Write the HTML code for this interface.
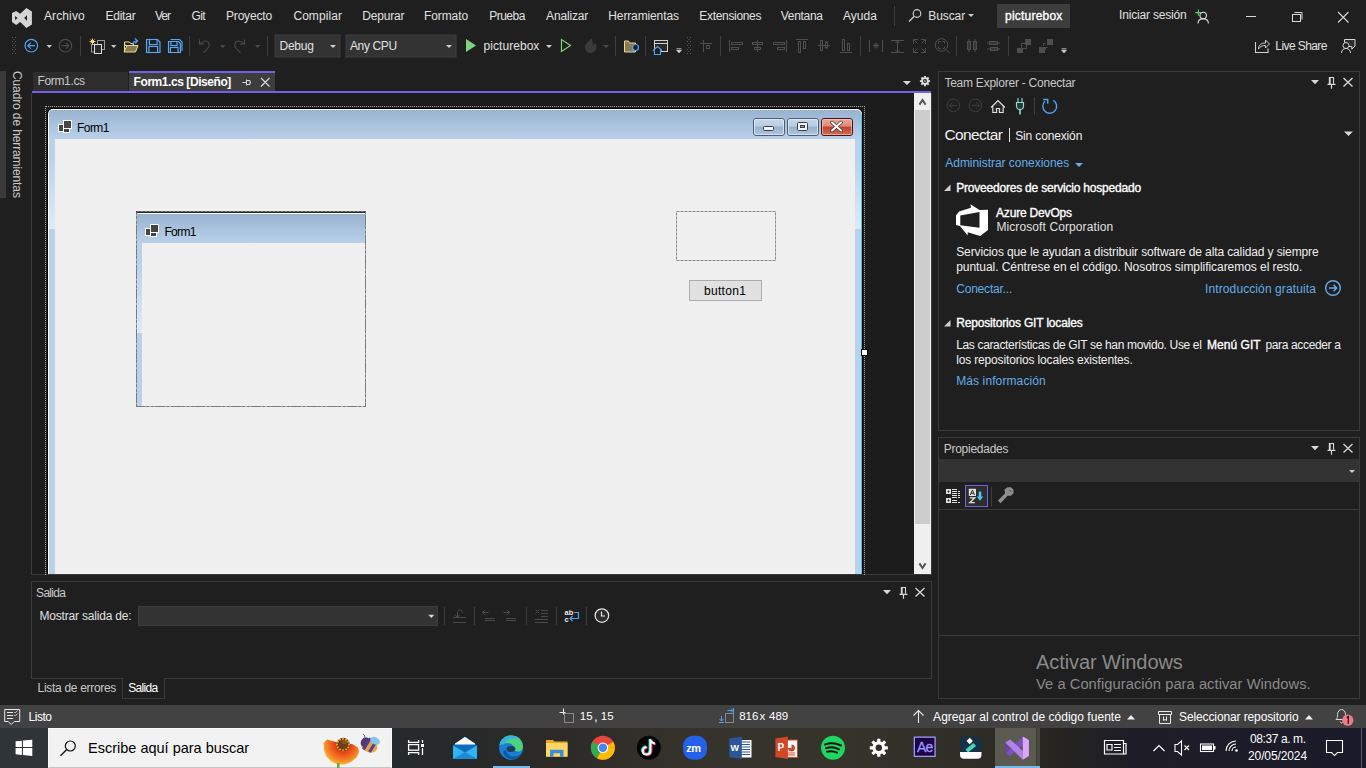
<!DOCTYPE html>
<html><head><meta charset="utf-8">
<style>
*{margin:0;padding:0;box-sizing:border-box}
html,body{width:1366px;height:768px;overflow:hidden;background:#1f1f1f;font-family:"Liberation Sans",sans-serif;font-size:12px;color:#e0e0e0}
.a{position:absolute}
.t{position:absolute;white-space:nowrap;line-height:1}
svg{position:absolute;overflow:visible}
</style></head><body>
<div class="t" style="left:43.90px;top:10.04px;letter-spacing:0.133px">Archivo</div>
<div class="t" style="left:105.40px;top:10.04px;letter-spacing:-0.220px">Editar</div>
<div class="t" style="left:155.00px;top:10.04px;letter-spacing:-1.000px">Ver</div>
<div class="t" style="left:191.50px;top:10.04px;letter-spacing:-0.600px">Git</div>
<div class="t" style="left:226.00px;top:10.04px;letter-spacing:-0.186px">Proyecto</div>
<div class="t" style="left:293.40px;top:10.04px;letter-spacing:0.071px">Compilar</div>
<div class="t" style="left:362.30px;top:10.04px;letter-spacing:-0.200px">Depurar</div>
<div class="t" style="left:424.10px;top:10.04px;letter-spacing:-0.117px">Formato</div>
<div class="t" style="left:489.20px;top:10.04px;letter-spacing:-0.500px">Prueba</div>
<div class="t" style="left:546.10px;top:10.04px;letter-spacing:-0.171px">Analizar</div>
<div class="t" style="left:608.30px;top:10.04px;letter-spacing:-0.127px">Herramientas</div>
<div class="t" style="left:699.30px;top:10.04px;letter-spacing:-0.320px">Extensiones</div>
<div class="t" style="left:780.80px;top:10.04px;letter-spacing:-0.300px">Ventana</div>
<div class="t" style="left:843.00px;top:10.04px">Ayuda</div>
<div class="a" style="left:997px;top:4px;width:73px;height:24px;background:#3d3d3d"></div>
<div class="t" style="left:928.30px;top:9.64px;letter-spacing:-0.100px">Buscar</div>
<div class="t" style="left:1005.00px;top:9.84px;color:#ffffff;-webkit-text-stroke:0.35px #ffffff;letter-spacing:0.222px">picturebox</div>
<div class="t" style="left:1119.00px;top:8.64px;letter-spacing:-0.177px">Iniciar sesión</div>
<!-- ICONS TOP -->
<svg width="1366" height="768" style="left:0;top:0">
<!-- VS logo -->
<path fill="#d4d4d4" fill-rule="evenodd" d="M12 13.1L16.2 10.9L20.2 13.8L26.4 8L31.9 11.5L31.9 24.4L26.4 27.9L20.2 21.9L16.2 25L12 21.9Z M15.1 16L17.6 18L15.1 20Z M27 15.3L24.2 18L27 20.8Z"/>
<!-- menubar separator -->
<rect x="894" y="6" width="1" height="20" fill="#3d3d3d"/>
<!-- search magnifier -->
<circle cx="917" cy="13.5" r="3.8" fill="none" stroke="#d0d0d0" stroke-width="1.2"/>
<line x1="914.3" y1="16.2" x2="909" y2="21.5" stroke="#d0d0d0" stroke-width="1.3"/>
<path d="M968 14h6l-3 3z" fill="#d0d0d0"/>
<!-- person icon signin -->
<circle cx="1203.2" cy="15.4" r="3.2" fill="none" stroke="#d8d8d8" stroke-width="1.1"/>
<path d="M1198 23.5c0-3 2.3-4.6 5.2-4.6s5.2 1.6 5.2 4.6" fill="none" stroke="#d8d8d8" stroke-width="1.1"/>
<path d="M1195.2 12.6h6.4M1198.4 9.4v6.4" stroke="#5fd35f" stroke-width="1.1"/>
<!-- window controls -->
<rect x="1246" y="16" width="10" height="1" fill="#d8d8d8"/>
<rect x="1292.5" y="14.5" width="8" height="7" fill="none" stroke="#d8d8d8" stroke-width="1"/>
<path d="M1294.5 12.5h7.5v7" fill="none" stroke="#d8d8d8" stroke-width="1"/>
<path d="M1338 12l10.5 10.5M1348.5 12l-10.5 10.5" stroke="#d8d8d8" stroke-width="1.1"/>

<!-- TOOLBAR -->
<g fill="#5a5a5a">
<rect x="12" y="37" width="1" height="1"/><rect x="15" y="37" width="1" height="1"/>
<rect x="13.5" y="39" width="1" height="1"/>
<rect x="12" y="41" width="1" height="1"/><rect x="15" y="41" width="1" height="1"/>
<rect x="13.5" y="43" width="1" height="1"/>
<rect x="12" y="45" width="1" height="1"/><rect x="15" y="45" width="1" height="1"/>
<rect x="13.5" y="47" width="1" height="1"/>
<rect x="12" y="49" width="1" height="1"/><rect x="15" y="49" width="1" height="1"/>
<rect x="13.5" y="51" width="1" height="1"/>
<rect x="12" y="53" width="1" height="1"/><rect x="15" y="53" width="1" height="1"/>
</g>
<circle cx="31.3" cy="45.7" r="6.3" fill="none" stroke="#4fa3f2" stroke-width="1.2"/>
<path d="M35 45.7h-7M30.8 42.7l-3 3l3 3" fill="none" stroke="#4fa3f2" stroke-width="1.2"/>
<path d="M46.5 45h5.5l-2.75 3z" fill="#c8c8c8"/>
<circle cx="65.4" cy="45.7" r="6.3" fill="none" stroke="#4a4a4a" stroke-width="1.2"/>
<path d="M61.7 45.7h7M65.9 42.7l3 3l-3 3" fill="none" stroke="#4a4a4a" stroke-width="1.2"/>
<rect x="80" y="36" width="1" height="20" fill="#3d3d3d"/>
<!-- new project -->
<rect x="97.5" y="40.5" width="7" height="9" fill="#1f1f1f" stroke="#9a9a9a" stroke-width="1"/>
<rect x="91.5" y="44.5" width="6" height="7.5" fill="none" stroke="#9a9a9a" stroke-width="1"/>
<rect x="94.5" y="44.5" width="7" height="9" fill="#2a2a2a" stroke="#e0e0e0" stroke-width="1"/>
<path d="M92.5 38.5v6M89.5 41.5h6M90.5 39.5l4 4M94.5 39.5l-4 4" stroke="#f0d77a" stroke-width="1"/>
<path d="M111 45h5.5l-2.75 3z" fill="#c8c8c8"/>
<!-- open folder -->
<path d="M124.5 42h5l1 1.5h3v2h-8.5z" fill="none" stroke="#f0d890" stroke-width="1"/>
<path d="M124.5 52V42.5M124 52h11.5l2.5-6.5h-11z" fill="#8a7a50" stroke="#f0d890" stroke-width="1"/>
<path d="M132.5 45.5c0-3 1.5-4.5 4.5-4.5M135 38.5l2.5 2.5l-2.5 2.5" fill="none" stroke="#4fa3f2" stroke-width="1.2"/>
<!-- save -->
<path d="M146.5 39.5h11l2.5 2.5v10.5h-13.5z" fill="#243444" stroke="#59a8f0" stroke-width="1.1"/>
<rect x="149.5" y="39.5" width="7.5" height="5" fill="#1f1f1f" stroke="#59a8f0" stroke-width="1.1"/>
<rect x="149" y="46.5" width="8.5" height="6" fill="#1f1f1f" stroke="#59a8f0" stroke-width="1.1"/>
<!-- save all -->
<path d="M170.5 39.5h9l2.5 2.5v9" fill="none" stroke="#59a8f0" stroke-width="1.1"/>
<path d="M168.5 41.5h10l2 2v9h-12z" fill="#243444" stroke="#59a8f0" stroke-width="1.1"/>
<rect x="171" y="41.5" width="6" height="4" fill="#1f1f1f" stroke="#59a8f0" stroke-width="1.1"/>
<rect x="170.5" y="47.5" width="7.5" height="5" fill="#1f1f1f" stroke="#59a8f0" stroke-width="1.1"/>
<rect x="189" y="36" width="1" height="20" fill="#3d3d3d"/>
<!-- undo / redo -->
<path d="M203.5 53l4.5-5c2.5-3 1-7-2.5-7c-2 0-3.5 1-5 2.5M199.5 39.5v4.5h4.5" fill="none" stroke="#4a4a4a" stroke-width="1.1"/>
<path d="M220 45h5.5l-2.75 3z" fill="#4a4a4a"/>
<path d="M240.5 53l-4.5-5c-2.5-3-1-7 2.5-7c2 0 3.5 1 5 2.5M244.5 39.5v4.5h-4.5" fill="none" stroke="#4a4a4a" stroke-width="1.1"/>
<path d="M255 45h5.5l-2.75 3z" fill="#4a4a4a"/>
<rect x="267" y="36" width="1" height="20" fill="#3d3d3d"/>
<!-- combos -->
<rect x="275" y="35" width="65" height="22" fill="#333333" stroke="#3f3f3f" stroke-width="1"/>
<path d="M330 45h6l-3 3z" fill="#d0d0d0"/>
<rect x="346" y="35" width="110" height="22" fill="#333333" stroke="#3f3f3f" stroke-width="1"/>
<path d="M446 45h6l-3 3z" fill="#d0d0d0"/>
<!-- play -->
<path d="M466 39v13l10-6.5z" fill="#7ed47e"/>
<path d="M546 45h6l-3 3z" fill="#d0d0d0"/>
<path d="M561.5 39.5v12l9-6z" fill="none" stroke="#7ed47e" stroke-width="1.2"/>
<!-- hot reload (dim) -->
<path d="M591 38c-1 3-6 5-6 9.5c0 3 2.5 5.5 5.5 5.5s6-2.5 6-6c0-2-1-3.5-2-4.5c0 2-1 3-2 3c1-3 0-5.5-1.5-7.5z" fill="#3a3a3a"/>
<path d="M603 45h6l-3 3z" fill="#4a4a4a"/>
<rect x="615" y="36" width="1" height="20" fill="#3d3d3d"/>
<!-- folder search -->
<path d="M624.5 41v11h11V43h-6l-1-2z" fill="#8a7a50" stroke="#f0d890" stroke-width="1"/>
<circle cx="635.5" cy="47.5" r="3" fill="#1f1f1f" stroke="#4fa3f2" stroke-width="1.2"/>
<line x1="633.3" y1="49.7" x2="630.5" y2="52.5" stroke="#4fa3f2" stroke-width="1.3"/>
<rect x="645" y="36" width="1" height="20" fill="#3d3d3d"/>
<!-- form view icon -->
<rect x="654.5" y="40.5" width="13" height="11" fill="#2a2a2a" stroke="#d0d0d0" stroke-width="1"/>
<rect x="655" y="43" width="12" height="1" fill="#d0d0d0"/>
<path d="M654.5 54.5v-4.5l-1.5 0.5l4.5-4l4.5 4l-1.5-0.5v4.5z" fill="#1f1f1f" stroke="#4fa3f2" stroke-width="1.1"/>
<path d="M676.5 48.5h5M676.5 50h5l-2.5 3z" fill="#d0d0d0" stroke="#d0d0d0" stroke-width="0.6"/>
<g fill="#5a5a5a">
<rect x="687" y="37" width="1" height="1"/><rect x="690" y="37" width="1" height="1"/>
<rect x="688.5" y="39" width="1" height="1"/>
<rect x="687" y="41" width="1" height="1"/><rect x="690" y="41" width="1" height="1"/>
<rect x="688.5" y="43" width="1" height="1"/>
<rect x="687" y="45" width="1" height="1"/><rect x="690" y="45" width="1" height="1"/>
<rect x="688.5" y="47" width="1" height="1"/>
<rect x="687" y="49" width="1" height="1"/><rect x="690" y="49" width="1" height="1"/>
<rect x="688.5" y="51" width="1" height="1"/>
<rect x="687" y="53" width="1" height="1"/><rect x="690" y="53" width="1" height="1"/>
</g>
<g fill="none" stroke="#4e4e4e" stroke-width="1">
<!-- align to grid -->
<path d="M700 43.5h12M703.5 40v12"/><rect x="706.5" y="45.5" width="3" height="3"/>
<!-- align left -->
<path d="M729.5 40v12"/><rect x="731.5" y="42.5" width="11" height="2"/><rect x="731.5" y="47.5" width="7" height="2"/>
<!-- align center -->
<path d="M757.5 40v12"/><rect x="752.5" y="42.5" width="10" height="2"/><rect x="754.5" y="47.5" width="6" height="2"/>
<!-- align right -->
<path d="M786.5 40v12"/><rect x="773.5" y="42.5" width="11" height="2"/><rect x="777.5" y="47.5" width="7" height="2"/>
<!-- align tops -->
<path d="M796 39.5h12"/><rect x="798.5" y="41.5" width="2" height="11"/><rect x="803.5" y="41.5" width="2" height="7"/>
<!-- align middles -->
<path d="M818 45.5h12"/><rect x="820.5" y="40.5" width="2" height="10"/><rect x="825.5" y="42" width="2" height="6"/>
<!-- align bottoms -->
<path d="M840 52.5h12"/><rect x="842.5" y="39.5" width="2" height="11"/><rect x="847.5" y="43.5" width="2" height="7"/>
<!-- size to grid -->
<path d="M869.5 40v12M882.5 40v12M873 45.5h6M876 42.5v6M874 43.5l4 4M878 43.5l-4 4"/>
<!-- same height -->
<path d="M891 40.5h13M891 52.5h13M897.5 41v11M895.5 43l2-2l2 2M895.5 50l2 2l2-2"/>
<!-- size -->
<path d="M913.5 44v-4.5h4.5M925.5 44v-4.5h-4.5M913.5 48v4.5h4.5M925.5 48v4.5h-4.5M914 40l3.5 3.5M925 40l-3.5 3.5M914 52l3.5-3.5M925 52l-3.5-3.5"/>
<!-- zoom circle -->
<circle cx="941.5" cy="45" r="6.3"/><path d="M946 49.5l4 4M938.5 43.5v-2h2M944.5 43.5v-2h-2M938.5 46.5v2h2M944.5 46.5v2h-2"/>
<!-- spacing -->
<rect x="967.5" y="41.5" width="3" height="8"/><rect x="973.5" y="41.5" width="3" height="8"/><path d="M969 39v13M975 39v13"/>
<rect x="989.5" y="41.5" width="8" height="3"/><rect x="990.5" y="47.5" width="7" height="3"/><path d="M987 43h13M987 49h13"/>
</g>
<rect x="956" y="36" width="1" height="20" fill="#3d3d3d"/>
<rect x="1008" y="36" width="1" height="20" fill="#3d3d3d"/>
<rect x="860" y="36" width="1" height="20" fill="#3d3d3d"/>
<rect x="720" y="36" width="1" height="20" fill="#3d3d3d"/>
<!-- bring front / send back -->
<rect x="1017" y="48" width="6" height="5" fill="#4e4e4e"/><rect x="1025" y="39" width="6" height="6" fill="#4e4e4e"/>
<rect x="1021.5" y="43.5" width="5" height="5" fill="none" stroke="#4e4e4e"/>
<rect x="1039" y="47" width="6" height="6" fill="#4e4e4e"/><rect x="1047" y="39" width="6" height="6" fill="#4e4e4e"/>
<path d="M1043.5 45.5v-2h2M1047.5 47.5h-2v2" fill="none" stroke="#4e4e4e"/>
<path d="M1061.5 48.5h5M1061.5 50h5l-2.5 3z" fill="#d0d0d0" stroke="#d0d0d0" stroke-width="0.6"/>
<!-- live share -->
<path d="M1255.5 42v10.5h12.5v-4" fill="none" stroke="#d0d0d0" stroke-width="1.1"/>
<path d="M1258.5 49c0-4 2.5-6 7-6v-3l4 4l-4 4v-2.5c-3.5 0-5.5 1-7 3.5z" fill="none" stroke="#d0d0d0" stroke-width="1"/>
<!-- feedback -->
<path d="M1344.5 45V39.5h10.5v6.5l-3.2 3.2V46.5h-5" fill="#2d2d2d" stroke="#d8d8d8" stroke-width="1"/>
<circle cx="1346" cy="45.5" r="3" fill="#1f1f1f" stroke="#d0d0d0" stroke-width="1"/>
<path d="M1341.5 53c0-3 2-4.5 4.5-4.5s4.5 1.5 4.5 4.5" fill="none" stroke="#d0d0d0" stroke-width="1"/>
</svg>



<div class="t" style="left:279.50px;top:40.04px;letter-spacing:-0.250px">Debug</div>
<div class="t" style="left:350.00px;top:40.04px;letter-spacing:-0.383px">Any CPU</div>
<div class="t" style="left:483.50px;top:40.04px;letter-spacing:0.056px">picturebox</div>
<div class="t" style="left:1275.30px;top:39.84px;letter-spacing:-0.578px">Live Share</div>
<div class="a" style="left:0;top:71px;width:6px;height:127px;background:#3a3a3a"></div>
<div class="t" style="left:10.7px;top:70.5px;writing-mode:vertical-rl;color:#c8c8c8;letter-spacing:-0.12px">Cuadro de herramientas</div>
<div class="a" style="left:33px;top:72px;width:95px;height:19px;background:#2d2d2d"></div>
<div class="t" style="left:37.50px;top:74.94px;color:#c8c8c8;letter-spacing:-0.343px">Form1.cs</div>
<div class="a" style="left:129px;top:71px;width:146px;height:20px;background:#3d3d3d;border-top:2px solid #7160e8"></div>
<div class="t" style="left:133.60px;top:75.94px;color:#ffffff;font-weight:bold;letter-spacing:-0.438px">Form1.cs [Diseño]</div>
<div class="a" style="left:32px;top:91px;width:899px;height:2px;background:#7160e8"></div>
<svg width="1366" height="768" style="left:0;top:0">
<path d="M242.5 82.5h4M246.5 79.5v6M246.5 80.5h3.5v4h-3.5M250 82.5h1" fill="none" stroke="#d8d8d8" stroke-width="1"/>
<path d="M261 78l8.5 8.5M269.5 78l-8.5 8.5" stroke="#d8d8d8" stroke-width="1.2"/>
<path d="M902.8 81h8.2l-4.1 4z" fill="#d8d8d8"/>
<g transform="translate(925 81.1)" fill="#e0e0e0"><circle r="3.8"/><g stroke="#e0e0e0" stroke-width="1.9"><path d="M0 -5.1v10.2M-5.1 0h10.2M-3.6 -3.6l7.2 7.2M3.6 -3.6l-7.2 7.2"/></g><circle r="2" fill="#1f1f1f"/><circle r="0.9" fill="#d0d0d0"/></g>
</svg>
<div class="a" style="left:31px;top:93px;width:901px;height:482px;border:1px solid #3a3a3a;border-top:none;background:#1c1c1c"></div>
<!-- FORM -->
<div class="a" style="left:45px;top:106px;width:820px;height:469px;border:1px dotted #a8a8a8;border-bottom:none"></div>
<div class="a" style="left:47px;top:108px;width:816px;height:466px;background:#000;border-radius:6px 6px 0 0"></div>
<div class="a" style="left:48px;top:109px;width:814px;height:465px;background:#fff;border-radius:5px 5px 0 0"></div>
<div class="a" style="left:861px;top:114px;width:1px;height:460px;background:#3cc8f0"></div>
<div class="a" style="left:49px;top:110px;width:812px;height:464px;background:linear-gradient(#98b2d0,#b9d1ea 29px,#b9d1ea);border-radius:4px 4px 0 0"></div>
<div class="a" style="left:55px;top:139px;width:800px;height:435px;background:#f0f0f0"></div>
<div class="a" style="left:49px;top:139px;width:6px;height:90px;background:linear-gradient(#b9d1ea 20%,#dfeaf6)"></div>
<div class="a" style="left:855px;top:139px;width:6px;height:90px;background:linear-gradient(#b9d1ea 20%,#dfeaf6)"></div>
<svg width="1366" height="768" style="left:0;top:0">
<g stroke="#fff" stroke-width="1" fill="#444">
<rect x="63.5" y="120.5" width="8" height="8"/><rect x="58.5" y="124.5" width="5" height="7"/><rect x="63.5" y="128.5" width="6" height="4"/>
<rect x="150.5" y="224.5" width="8" height="8"/><rect x="145.5" y="228.5" width="5" height="7"/><rect x="150.5" y="232.5" width="6" height="4"/>
</g>
<!-- title buttons -->
<defs>
<linearGradient id="gb" x1="0" y1="0" x2="0" y2="1"><stop offset="0" stop-color="#c6d8ec"/><stop offset="0.45" stop-color="#b8cde4"/><stop offset="0.5" stop-color="#98b2cc"/><stop offset="1" stop-color="#aec6e0"/></linearGradient>
<linearGradient id="gr" x1="0" y1="0" x2="0" y2="1"><stop offset="0" stop-color="#eaa898"/><stop offset="0.45" stop-color="#de8a76"/><stop offset="0.5" stop-color="#c0422a"/><stop offset="1" stop-color="#d2705a"/></linearGradient>
</defs>
<rect x="753.5" y="118.5" width="31" height="17" rx="2.5" fill="url(#gb)" stroke="#4e5d72"/>
<rect x="754.5" y="119.5" width="29" height="15" rx="1.5" fill="none" stroke="#e4eef8" stroke-opacity="0.7"/>
<rect x="763.5" y="126.5" width="10" height="4" rx="1" fill="#f4f4f4" stroke="#3a3a4a"/>
<rect x="787.5" y="118.5" width="31" height="17" rx="2.5" fill="url(#gb)" stroke="#4e5d72"/>
<rect x="788.5" y="119.5" width="29" height="15" rx="1.5" fill="none" stroke="#e4eef8" stroke-opacity="0.7"/>
<rect x="797.5" y="122.5" width="10" height="8" rx="1" fill="#f4f4f4" stroke="#3a3a4a"/>
<rect x="800.5" y="125.5" width="4" height="2" fill="#8aa8c8" stroke="#3a3a4a"/>
<rect x="821.5" y="118.5" width="31" height="17" rx="2.5" fill="url(#gr)" stroke="#4a1414"/>
<rect x="822.5" y="119.5" width="29" height="15" rx="1.5" fill="none" stroke="#f8d0c8" stroke-opacity="0.6"/>
<path d="M832 122.5l4.5 4l4.5-4M832 130.5l4.5-4l4.5 4" fill="none" stroke="#3a3a4a" stroke-width="3.4" stroke-linecap="round"/>
<path d="M832 122.5l4.5 4l4.5-4M832 130.5l4.5-4l4.5 4" fill="none" stroke="#fff" stroke-width="2" stroke-linecap="round"/>
<!-- resize handle -->
<rect x="861.5" y="349.5" width="6" height="6" fill="#fff" stroke="#000"/>
<!-- picturebox dashed -->
<rect x="676.5" y="211.5" width="99" height="49" fill="none" stroke="#8a8a8a" stroke-dasharray="3 1"/>
</svg>
<!-- button1 -->
<div class="a" style="left:689px;top:280px;width:73px;height:21px;background:#e1e1e1;border:1px solid #adadad"></div>
<!-- inner form -->
<div class="a" style="left:136px;top:211px;width:230px;height:196px;border:1px dashed #7a7a7a"></div>
<div class="a" style="left:136px;top:211px;width:230px;height:2px;background:#2a2a2a"></div>
<div class="a" style="left:137px;top:213px;width:228px;height:1px;background:#fff"></div>
<div class="a" style="left:137px;top:214px;width:228px;height:29px;background:linear-gradient(#98b2d0,#b9d1ea)"></div>
<div class="a" style="left:137px;top:243px;width:5px;height:163px;background:#b9d1ea"></div>
<div class="a" style="left:137px;top:243px;width:5px;height:90px;background:linear-gradient(#b9d1ea 20%,#dfeaf6)"></div>
<div class="a" style="left:142px;top:243px;width:223px;height:163px;background:#f0f0f0"></div>
<svg width="1366" height="768" style="left:0;top:0">
<g stroke="#fff" stroke-width="1" fill="#444">
<rect x="150.5" y="224.5" width="8" height="8"/><rect x="145.5" y="228.5" width="5" height="7"/><rect x="150.5" y="232.5" width="6" height="4"/>
</g>
<rect x="136.5" y="211.5" width="229" height="195" fill="none" stroke="#7a7a7a" stroke-dasharray="3 1"/>
</svg>

<!-- SCROLLBAR -->
<div class="a" style="left:914px;top:93px;width:17px;height:481px;background:#f0f0f0"></div>
<div class="a" style="left:915px;top:110px;width:15px;height:414px;background:#cdcdcd"></div>
<svg width="1366" height="768" style="left:0;top:0">
<path d="M919.4 104.6L922.5 100L925.6 104.6" fill="none" stroke="#555" stroke-width="2"/>
<path d="M919.4 563.4L922.5 568L925.6 563.4" fill="none" stroke="#555" stroke-width="2"/>
</svg>

<div class="t" style="left:77.00px;top:121.54px;color:#000000;letter-spacing:-0.550px">Form1</div>
<div class="t" style="left:164.40px;top:225.84px;color:#000000;letter-spacing:-0.650px">Form1</div>
<div class="t" style="left:704.00px;top:285.34px;color:#000000;letter-spacing:0.300px">button1</div>
<div class="a" style="left:31px;top:581px;width:901px;height:98px;border:1px solid #3a3a3a"></div>
<div class="t" style="left:36.10px;top:586.74px;color:#c8c8c8;letter-spacing:-0.700px">Salida</div>
<div class="t" style="left:39.50px;top:610.44px;letter-spacing:-0.188px">Mostrar salida de:</div>
<div class="a" style="left:138px;top:606px;width:300px;height:20px;background:#333333;border:1px solid #3c3c3c"></div>
<div class="a" style="left:122px;top:678px;width:43px;height:21px;background:#1f1f1f;border:1px solid #3a3a3a;border-top:none"></div>
<div class="t" style="left:37.60px;top:681.64px;color:#c8c8c8;letter-spacing:-0.307px">Lista de errores</div>
<div class="t" style="left:128.20px;top:681.64px;color:#ffffff;letter-spacing:-0.680px">Salida</div>
<div class="a" style="left:938px;top:71px;width:422px;height:360px;border:1px solid #3a3a3a"></div>
<div class="t" style="left:944.40px;top:77.34px;color:#c8c8c8;letter-spacing:-0.239px">Team Explorer - Conectar</div>
<div class="t" style="left:944.40px;top:127.08px;font-size:15.5px;color:#f0f0f0;letter-spacing:-0.629px">Conectar</div>
<div class="a" style="left:1009px;top:128px;width:1px;height:14px;background:#e0e0e0"></div>
<div class="t" style="left:1015.20px;top:130.04px;color:#f0f0f0;letter-spacing:-0.145px">Sin conexión</div>
<div class="t" style="left:945.30px;top:157.24px;color:#64acea;letter-spacing:-0.038px">Administrar conexiones</div>
<div class="t" style="left:956.20px;top:181.84px;color:#ffffff;-webkit-text-stroke:0.35px #ffffff;letter-spacing:-0.206px">Proveedores de servicio hospedado</div>
<div class="t" style="left:996.00px;top:206.84px;color:#ffffff;-webkit-text-stroke:0.35px #ffffff;letter-spacing:-0.182px">Azure DevOps</div>
<div class="t" style="left:996.40px;top:220.84px;letter-spacing:0.100px">Microsoft Corporation</div>
<div class="t" style="left:956.20px;top:246.44px;color:#f0f0f0;letter-spacing:-0.120px">Servicios que le ayudan a distribuir software de alta calidad y siempre</div>
<div class="t" style="left:956.20px;top:261.14px;color:#f0f0f0;letter-spacing:-0.052px">puntual. Céntrese en el código. Nosotros simplificaremos el resto.</div>
<div class="t" style="left:956.20px;top:282.54px;color:#64acea;letter-spacing:-0.200px">Conectar...</div>
<div class="t" style="left:1205.10px;top:282.54px;color:#64acea;letter-spacing:0.100px">Introducción gratuita</div>
<div class="t" style="left:956.20px;top:316.84px;color:#ffffff;-webkit-text-stroke:0.35px #ffffff;letter-spacing:-0.174px">Repositorios GIT locales</div>
<div class="t" style="left:956.20px;top:339.34px;color:#f0f0f0;letter-spacing:-0.345px">Las características de GIT se han movido. Use el</div>
<div class="t" style="left:1207.00px;top:339.34px;color:#ffffff;-webkit-text-stroke:0.35px #ffffff;letter-spacing:0.043px">Menú GIT</div>
<div class="t" style="left:1265.50px;top:339.34px;color:#f0f0f0;letter-spacing:-0.362px">para acceder a</div>
<div class="t" style="left:956.20px;top:354.34px;color:#f0f0f0;letter-spacing:-0.157px">los repositorios locales existentes.</div>
<div class="t" style="left:956.20px;top:375.04px;color:#64acea;letter-spacing:0.107px">Más información</div>
<div class="a" style="left:938px;top:437px;width:422px;height:262px;border:1px solid #3a3a3a"></div>
<div class="t" style="left:943.70px;top:442.54px;color:#c8c8c8;letter-spacing:-0.260px">Propiedades</div>
<div class="a" style="left:939px;top:459px;width:420px;height:23px;background:#333333"></div>
<div class="a" style="left:939px;top:509px;width:420px;height:1px;background:#3a3a3a"></div>
<div class="a" style="left:939px;top:635px;width:420px;height:1px;background:#3a3a3a"></div>
<div class="t" style="left:1036.00px;top:652.07px;font-size:20px;color:#8a8a8a;letter-spacing:-0.071px">Activar Windows</div>
<div class="t" style="left:1036.00px;top:677.36px;font-size:14.7px;color:#8a8a8a;letter-spacing:0.051px">Ve a Configuración para activar Windows.</div>
<div class="a" style="left:0;top:705px;width:1366px;height:23px;background:#424242"></div>
<div class="t" style="left:28.50px;top:711.04px;color:#ffffff;letter-spacing:-0.450px">Listo</div>
<div class="t" style="left:579.80px;top:711.17px;font-size:11.5px;color:#ffffff">15</div>
<div class="t" style="left:594.20px;top:710.74px;color:#ffffff">,</div>
<div class="t" style="left:600.80px;top:711.17px;font-size:11.5px;color:#ffffff">15</div>
<div class="t" style="left:739.20px;top:711.17px;font-size:11.5px;color:#ffffff">816</div>
<div class="t" style="left:759.40px;top:711.17px;font-size:11.5px;color:#ffffff">x</div>
<div class="t" style="left:769.00px;top:711.17px;font-size:11.5px;color:#ffffff">489</div>
<div class="t" style="left:933.10px;top:710.74px;color:#ffffff;letter-spacing:0.029px">Agregar al control de código fuente</div>
<div class="t" style="left:1179.00px;top:710.74px;color:#ffffff;letter-spacing:-0.114px">Seleccionar repositorio</div>
<div class="a" style="left:0;top:728px;width:1366px;height:40px;background:linear-gradient(90deg,#2e3438 0,#2e3438 48px,#252a2d 392px,#2b2a27 550px,#35332b 700px,#36332b 850px,#2d2b25 1000px,#252420 1060px,#1e1d27 1130px,#1b1a2a 1366px)"></div>
<div class="a" style="left:48px;top:728px;width:344px;height:40px;background:#f2f2f2;border:1px solid #fafafa;border-bottom:1px solid #c4c4c4"></div>
<div class="t" style="left:88.00px;top:741.13px;font-size:14.5px;color:#000000">Escribe aquí para buscar</div>
<div class="t" style="left:1250.00px;top:732.64px;color:#ffffff;letter-spacing:-0.400px">08:37 a. m.</div>
<div class="t" style="left:1248.00px;top:750.34px;color:#ffffff;letter-spacing:-0.111px">20/05/2024</div>
<svg width="1366" height="768" style="left:0;top:0">
<!-- panel header icons: Team Explorer -->
<g id="hdr">
<path d="M1311 80h8l-4 4.2z" fill="#d8d8d8"/>
<path d="M1329.7 77.5h3.8v6.2" fill="none" stroke="#d8d8d8" stroke-width="1.1"/><rect x="1328.8" y="77" width="1.9" height="7" fill="#d8d8d8"/><path d="M1327.5 84.3h8M1331.5 84.5v4.2" fill="none" stroke="#d8d8d8" stroke-width="1.2"/>
<path d="M1343.5 78l9 8.5M1352.5 78l-9 8.5" stroke="#d8d8d8" stroke-width="1.3"/>
</g>
<use href="#hdr" transform="translate(0 366)"/>
<use href="#hdr" transform="translate(-428 510)"/>
<!-- team explorer nav -->
<circle cx="953.4" cy="105.4" r="6.3" fill="none" stroke="#3e3e3e" stroke-width="1"/>
<path d="M957 105.4h-7M952.5 102.4l-3 3l3 3" fill="none" stroke="#3e3e3e" stroke-width="1"/>
<circle cx="975.4" cy="105.4" r="6.3" fill="none" stroke="#3e3e3e" stroke-width="1"/>
<path d="M971.8 105.4h7M976.3 102.4l3 3l-3 3" fill="none" stroke="#3e3e3e" stroke-width="1"/>
<path d="M991 107.5l7-7l7 7M992.8 106v6.5h3.8v-4h2.8v4h3.8v-6.5" fill="#333" stroke="#e0e0e0" stroke-width="1.1"/>
<path d="M1018 98v4M1022 98v4" stroke="#8ee0d0" stroke-width="1.1"/>
<path d="M1016.5 102.5h7v3.5c0 2-1.5 3.5-3.5 3.5s-3.5-1.5-3.5-3.5z" fill="#2a3a38" stroke="#8ee0d0" stroke-width="1.1"/>
<path d="M1020 109.5v5" stroke="#8ee0d0" stroke-width="1.6"/>
<rect x="1034" y="97" width="1" height="18" fill="#3d3d3d"/>
<path d="M1053.3 100.4A6.9 6.9 0 1 1 1045 101.3" fill="none" stroke="#4fa3f2" stroke-width="1.4"/>
<path d="M1043.2 99.5H1047.7V103.7" fill="none" stroke="#4fa3f2" stroke-width="1.5"/>
<path d="M1344 131.5h9l-4.5 4.5z" fill="#d8d8d8"/>
<path d="M1075 163h8l-4 4z" fill="#64acea"/>
<path d="M944 191h6.5v-6.5z" fill="#d0d0d0"/>
<path d="M944 326.5h6.5v-6.5z" fill="#d0d0d0"/>
<!-- azure devops -->
<path fill="#fff" fill-rule="evenodd" d="M970.5 204.2L979.5 210L988 209.7L988 230L980.2 236L967.7 232.3L967.7 235.5L959.9 226.1L956 225L956 215.5L959.1 211.6L970.9 207.7Z M960.3 215.5L979.5 212L979.5 227.7L960.3 225.3Z"/>
<!-- circle arrow -->
<circle cx="1333" cy="288" r="7.3" fill="none" stroke="#64acea" stroke-width="1.4"/>
<path d="M1329 288h7.5M1333.5 284.8l3.2 3.2l-3.2 3.2" fill="none" stroke="#64acea" stroke-width="1.4"/>
<!-- properties -->
<path d="M1349 470h6l-3 3z" fill="#d0d0d0"/>
<g fill="#e0e0e0">
<rect x="946" y="489" width="5" height="5"/><rect x="946" y="498" width="5" height="5"/>
<rect x="952" y="489" width="5" height="1"/><rect x="952" y="491" width="5" height="1"/><rect x="952" y="493" width="5" height="1"/><rect x="952" y="495" width="5" height="1"/><rect x="952" y="497" width="5" height="1"/><rect x="952" y="500" width="5" height="1"/><rect x="952" y="502" width="5" height="1"/>
<rect x="958" y="491" width="2" height="1"/><rect x="958" y="493" width="2" height="1"/><rect x="958" y="495" width="2" height="1"/><rect x="958" y="497" width="2" height="1"/><rect x="958" y="502" width="2" height="1"/>
</g>
<path d="M947.5 491.5h2M948.5 490.5v2M947.5 500.5h2M948.5 499.5v2" stroke="#222" stroke-width="1"/>
<rect x="965.5" y="485.5" width="22" height="21" fill="#2d2d2d" stroke="#7160e8" stroke-width="1"/>
<rect x="968.8" y="488.7" width="7.2" height="7.3" rx="0.5" fill="#e0e0e0"/>
<path d="M970.3 495l2.1-5l2.1 5M971 493.3h2.8" fill="none" stroke="#222" stroke-width="0.9"/>
<path d="M969.8 497.8h5l-5 4.8h5" fill="none" stroke="#e0e0e0" stroke-width="1.3"/>
<path d="M980 491.5v6" stroke="#4fc3f7" stroke-width="2.6"/>
<path d="M976.8 496.5h6.4l-3.2 4.3z" fill="#4fc3f7"/>
<rect x="991" y="487" width="1" height="19" fill="#3d3d3d"/>
<path d="M1004.5 489.5l3-2.3h3.5l2.5 2.6v3.5l-2.5 2.5h-3.3l-7.2 7.4l-2.6-2.6l7.1-7.2z" fill="#8e8e8e"/>
<path d="M1009.2 489.8l2 2" stroke="#6a6a6a" stroke-width="1.6"/>
<!-- output toolbar -->
<path d="M428.3 614.8h6l-3 3.2z" fill="#d8d8d8"/>
<g fill="#3d3d3d"><rect x="444" y="607" width="1" height="18"/><rect x="474" y="607" width="1" height="18"/><rect x="526" y="607" width="1" height="18"/><rect x="556" y="607" width="1" height="18"/><rect x="586" y="607" width="1" height="18"/></g>
<g fill="none" stroke="#4a4a4a" stroke-width="1">
<path d="M453 617.5h13M453 622.5h13M457.5 617v-4c0-2 1-3 2.5-3s2.5 1 2.5 3M455.5 615l2 2.5l2-2.5"/>
<path d="M482.5 612.5h6M485 610l-2.5 2.5l2.5 2.5"/><path d="M485 618.5h10M485 620.5h10"/>
<path d="M503.5 612.5h6M507 610l2.5 2.5l-2.5 2.5"/><path d="M506 618.5h10M506 620.5h10"/>
<path d="M535.5 609.5l4 4M539.5 609.5l-4 4M541 610.5h7M541 613.5h7M541 616.5h7M535 619.5h13M535 622.5h13"/>
</g>
<text x="564.5" y="615" font-family="Liberation Sans" font-size="7.5" font-weight="bold" fill="#e8e8e8">ab</text>
<text x="564.5" y="622" font-family="Liberation Sans" font-size="7.5" font-weight="bold" fill="#e8e8e8">c</text>
<path d="M574 612.5h4.5v6h-8.5M572.5 616l-2.5 2.5l2.5 2.5" fill="none" stroke="#4fa3f2" stroke-width="1.2"/>
<circle cx="601.9" cy="615.6" r="6.8" fill="#2d2d2d" stroke="#e8e8e8" stroke-width="1.2"/>
<path d="M601.5 611.5v4.5h3.5" fill="none" stroke="#e8e8e8" stroke-width="1.2"/>
</svg>
<svg width="1366" height="768" style="left:0;top:0">
<!-- status bar icons -->
<path d="M4.7 709.5h15v12h-5.5l-3 3l-3-3h-3.5z" fill="none" stroke="#e8e8e8" stroke-width="1"/>
<path d="M7 712.5h6M7 715.5h6M7 718.5h6" stroke="#e8e8e8" stroke-width="1"/>
<path d="M14.2 712l1 1l2.3-2.5M14.2 715l1 1l2.3-2.5" fill="none" stroke="#e8e8e8" stroke-width="0.8"/>
<path d="M563.5 708.5v6M559.5 712.5h6" stroke="#e8e8e8" stroke-width="1"/>
<rect x="564.5" y="713.5" width="9" height="9" fill="none" stroke="#d0d0d0" stroke-width="1" stroke-dasharray="1 1"/>
<rect x="725.5" y="713.5" width="8" height="9" fill="none" stroke="#d0d0d0" stroke-width="1" stroke-dasharray="1 1"/>
<path d="M727.5 710.5h5M731 708.5l2 2l-2 2M733.5 708v5" fill="none" stroke="#4fa3f2" stroke-width="1"/>
<path d="M721.5 716v5M719.5 719l2 2l2-2M719 722.5h5" fill="none" stroke="#4fa3f2" stroke-width="1"/>
<path d="M918.5 723v-12.5M913.5 715.5l5-5l5 5" fill="none" stroke="#e8e8e8" stroke-width="1.1"/>
<path d="M1127 719.5h8l-4-4.5z" fill="#f0f0f0"/>
<path d="M1305 719.5h8l-4-4.5z" fill="#f0f0f0"/>
<path d="M1158.5 711.5h13v3h-13z M1159.5 714.5v9h11v-9 M1163.5 716.5v4l1.5-1l1.5 1v-4" fill="none" stroke="#e8e8e8" stroke-width="1"/>
<path d="M1336 719.5c1.5-1 1.5-2.5 1.5-5c0-3 2-5 4-5s4 2 4 5c0 2.5 0 4 1.5 5z M1340 721.5c0.5 1 1 1.5 1.5 1.5s1-0.5 1.5-1.5" fill="none" stroke="#d8d8d8" stroke-width="1"/>
<circle cx="1347.8" cy="720.2" r="5.6" fill="#f07a85"/>
<path d="M1346.8 717.8l1.5-1.3v7.3" fill="none" stroke="#111" stroke-width="1.2"/>

<!-- TASKBAR ICONS -->
<!-- windows logo -->
<g fill="#fff">
<path d="M15.6 741.3L21.9 740.7V747H15.6z"/><path d="M22.9 740.6L32.3 739.7V747H22.9z"/>
<path d="M15.6 748H21.9V754.9L15.6 754.3z"/><path d="M22.9 748H32.3V756.1L22.9 755z"/>
</g>
<!-- search icon -->
<circle cx="70.3" cy="746" r="5" fill="none" stroke="#111" stroke-width="1.2"/>
<path d="M66.8 749.5l-6.3 6.3" stroke="#111" stroke-width="1.3"/>
<!-- flower -->
<defs>
<radialGradient id="pet" cx="343" cy="744" r="21" gradientUnits="userSpaceOnUse"><stop offset="0.2" stop-color="#c83010"/><stop offset="0.55" stop-color="#f05a1c"/><stop offset="0.85" stop-color="#f7902a"/><stop offset="1" stop-color="#f8c040"/></radialGradient>
</defs>
<path d="M343 744L327 739.5L323.5 743L324 750L326 756L331 761.5L338 764.5L345 764.5L351 762L356.5 757.5L359 752L358 747.5L352 744z" fill="url(#pet)"/>
<rect x="337" y="763" width="2.5" height="5" fill="#6aa83a"/>
<circle cx="343.2" cy="744.3" r="6.6" fill="#6e3e14"/>
<ellipse cx="344.5" cy="742" rx="3" ry="2" fill="#8a5424"/>
<circle cx="349.00" cy="744.50" r="0.9" fill="#f5c22a"/><circle cx="348.20" cy="747.30" r="0.9" fill="#f5c22a"/><circle cx="346.00" cy="749.35" r="0.9" fill="#f5c22a"/><circle cx="343.00" cy="750.10" r="0.9" fill="#f5c22a"/><circle cx="340.00" cy="749.35" r="0.9" fill="#f5c22a"/><circle cx="337.80" cy="747.30" r="0.9" fill="#f5c22a"/><circle cx="337.00" cy="744.50" r="0.9" fill="#f5c22a"/><circle cx="337.80" cy="741.70" r="0.9" fill="#f5c22a"/><circle cx="340.00" cy="739.65" r="0.9" fill="#f5c22a"/><circle cx="343.00" cy="738.90" r="0.9" fill="#f5c22a"/><circle cx="346.00" cy="739.65" r="0.9" fill="#f5c22a"/><circle cx="348.20" cy="741.70" r="0.9" fill="#f5c22a"/>
<!-- bee -->
<g transform="translate(369 745.2) rotate(32)">
<ellipse cx="0" cy="0" rx="9" ry="6.8" fill="#e4a44c"/>
<path d="M-2.5 -6.6v13.2M4 -5.6v11.2" stroke="#5a3c8c" stroke-width="3"/>
<path d="M-9 -0.5a4.5 5 0 0 1 5.5 -5v10a4.5 5 0 0 1 -5.5 -5z" fill="#4c3a78"/>
<ellipse cx="2.8" cy="-7" rx="5.2" ry="3.6" fill="#84c6f0"/>
</g>
<path d="M363.3 734.3c1.2 0.4 1.6 1.6 1.3 3.4" fill="none" stroke="#5a3c8c" stroke-width="1"/>
<!-- task view -->
<g fill="none" stroke="#fff" stroke-width="1.3">
<path d="M408.6 740v2.3h10v-2.3"/><rect x="408.6" y="744.6" width="10" height="5.6"/><path d="M408.6 755v-2.3h10v2.3"/>
<path d="M422.5 740v3M422.5 748v7"/>
</g>
<rect x="421" y="744" width="3" height="3" fill="#fff"/>
<!-- mail -->
<path d="M453 745.5l12 -9l12 9v13.5h-24z" fill="#0f6cbd"/>
<path d="M455 744.5h20v-1l-10-6.5l-10 6.5z" fill="#fff"/>
<path d="M453 745.5l12 7l12-7v13.5h-24z" fill="#31b4ef"/>
<path d="M453 759l12-7l12 7z" fill="#1e8ad6"/>
<!-- edge -->
<circle cx="511.1" cy="747.8" r="12" fill="#1a7fd4"/>
<path d="M499.5 745c1.5-6.5 6-9.5 12-9.5c6.5 0 11.5 5 11.5 11c0 3-2 5-5 5c-2.5 0-4-1-4-2.5c0-4-3-6-6.5-6c-4 0-6.5 1-8 2z" fill="#4bd37f"/>
<path d="M499.5 745c1.5-6.5 6-9.5 12-9.5c4 0 7 1.5 9 4c-4-2-9-1.5-12 0.5c-2 1-4 2.5-4.5 4.5c-1.5 0-3 0-4.5 0.5z" fill="#36b2e0"/>
<path d="M506 750c0 4 3.5 6.5 7.5 6.5c3 0 6-1 8-3c-1.5 4-5.5 5.5-9.5 5.5c-5 0-8.5-3.5-9-7.5z" fill="#0c59a4"/>
<ellipse cx="511" cy="749" rx="4.5" ry="3" fill="#1f3d60"/>
<rect x="493" y="766" width="37" height="2" fill="#76b9ed"/>
<!-- explorer -->
<path d="M546 740h7l1.5 1.5h13v15h-21.5z" fill="#e8a927"/>
<rect x="546" y="743" width="21.5" height="13.7" fill="#fdd66a"/>
<path d="M550 756.7v-7h13.5v7h-3.5v-3.5h-6.5v3.5z" fill="#3d8ed8"/>
<!-- chrome -->
<circle cx="602.9" cy="747.8" r="12" fill="#e8463c"/>
<path d="M602.9 747.8L592.5 741.8A12 12 0 0 0 597 758.3z" fill="#34a853"/>
<path d="M602.9 747.8L597 758.3A12 12 0 0 0 614.9 747.8z" fill="#fbbc04"/>
<path d="M602.9 747.8L614.9 747.8A12 12 0 0 0 613.3 741.8z" fill="#fbbc04"/>
<circle cx="602.9" cy="747.8" r="5.3" fill="#fff"/>
<circle cx="602.9" cy="747.8" r="4.2" fill="#4285f4"/>
<!-- tiktok -->
<circle cx="648.8" cy="747.8" r="12" fill="#050505"/>
<path d="M650.5 739.5v11c0 2.5-1.8 4-3.8 4c-2.2 0-3.8-1.6-3.8-3.6s1.6-3.8 3.8-3.8M650.5 739.5c0.5 2.2 2.2 3.8 4.5 4" fill="none" stroke="#25f4ee" stroke-width="2.2" transform="translate(-0.8 -0.6)"/>
<path d="M650.5 739.5v11c0 2.5-1.8 4-3.8 4c-2.2 0-3.8-1.6-3.8-3.6s1.6-3.8 3.8-3.8M650.5 739.5c0.5 2.2 2.2 3.8 4.5 4" fill="none" stroke="#fe2c55" stroke-width="2.2" transform="translate(0.8 0.6)"/>
<path d="M650.5 739.5v11c0 2.5-1.8 4-3.8 4c-2.2 0-3.8-1.6-3.8-3.6s1.6-3.8 3.8-3.8M650.5 739.5c0.5 2.2 2.2 3.8 4.5 4" fill="none" stroke="#fff" stroke-width="1.8"/>
<!-- zoom -->
<rect x="683" y="735.8" width="24" height="24" rx="10" fill="#2461e8"/>
<text x="686.3" y="751.5" font-family="Liberation Sans" font-weight="bold" font-size="11" fill="#fff" letter-spacing="-0.5">zm</text>
<!-- word -->
<path d="M738 740h13.5v17.5h-13.5z" fill="#fff"/>
<path d="M740 742h10M740 744.5h10M740 747h10M740 749.5h10M740 752h10M740 754.5h10" stroke="#2b579a" stroke-width="1"/>
<path d="M729.3 738.5l12.5-2v22.5l-12.5-2z" fill="#2b579a"/>
<text x="730.5" y="751.3" font-family="Liberation Sans" font-weight="bold" font-size="9" fill="#fff">W</text>
<!-- powerpoint -->
<path d="M784 740h13.5v17.5h-13.5z" fill="#fff" stroke="#d24726" stroke-width="1"/>
<path d="M788 748a3.5 3.5 0 1 0 3.5-3.5v3.5z" fill="#d24726"/>
<path d="M787 753h8M787 755h8" stroke="#d24726" stroke-width="1"/>
<path d="M775.4 738.5l12.5-2v22.5l-12.5-2z" fill="#d24726"/>
<text x="777.5" y="751.3" font-family="Liberation Sans" font-weight="bold" font-size="10" fill="#fff">P</text>
<!-- spotify -->
<circle cx="833" cy="747.8" r="12" fill="#1ed760"/>
<path d="M825 744.5c5-2 11-1.5 16 1M826 748.3c4-1.5 9-1 13 1M827 751.8c3.5-1 7-0.7 10 0.8" fill="none" stroke="#111" stroke-width="2" stroke-linecap="round"/>
<!-- settings -->
<g transform="translate(878.8 747.8)" fill="#fff">
<circle r="6.5"/>
<g stroke="#fff" stroke-width="3.2"><path d="M0 -9v18M-9 0h18M-6.4 -6.4l12.8 12.8M6.4 -6.4l-12.8 12.8"/></g>
<circle r="3.2" fill="#2f2c26"/>
</g>
<!-- Ae -->
<rect x="913.7" y="736.5" width="22" height="20.5" fill="#9999ff"/>
<rect x="915" y="737.8" width="19.4" height="17.9" fill="#1f0040"/>
<text x="917" y="751.6" font-family="Liberation Sans" font-size="14" fill="#9999ff" letter-spacing="-0.9" stroke="#9999ff" stroke-width="0.3">Ae</text>
<!-- filmora -->
<rect x="960" y="737" width="21.5" height="21.7" rx="4" fill="#163046"/>
<path d="M960 752h21.5v2.7a4 4 0 0 1 -4 4h-13.5a4 4 0 0 1 -4 -4z" fill="#fff"/>
<path d="M965.5 749.5l8-6.5l2.5 3l-8 6.5z" fill="#45d6b6"/>
<rect x="967.5" y="738.8" width="4.5" height="4.5" fill="#fff" transform="rotate(45 969.75 741)"/>
<!-- VS active -->
<rect x="995" y="728" width="42" height="40" fill="#5a5a50"/>
<rect x="1037" y="728" width="3" height="40" fill="#48483f"/>
<rect x="1036" y="728" width="1" height="40" fill="#3e3e36"/>
<rect x="995" y="766" width="45" height="2" fill="#76b9ed"/>
<path d="M1005.8 752.7L1009.9 756.2L1022.8 745L1022.8 736.6z" fill="#7a52c0"/>
<path d="M1005.2 742.4L1008.6 745.3L1008.6 751L1005.8 752.7z" fill="#6a42b0"/>
<path d="M1005.2 742.4L1010.2 739.5L1022.8 751L1022.8 759.7z" fill="#b381ea"/>
<path d="M1022.8 736.6L1028.9 740.1L1028.9 755.9L1022.8 759.7z" fill="#dba6ff"/>
<!-- news -->
<g fill="none" stroke="#fff" stroke-width="1.2">
<path d="M1104.5 740.5h19v13.5h-19z"/><path d="M1123.5 743.5h2.5v10.5h-2.5"/>
<path d="M1107 744.5h5v5.5h-5z"/><path d="M1114 744.5h7M1114 747.5h7M1114 750.5h7"/>
</g>
<!-- chevron -->
<path d="M1153.5 751l5.5-5.5l5.5 5.5" fill="none" stroke="#fff" stroke-width="1.2"/>
<!-- volume muted -->
<path d="M1175 744.5h2.5l4-3.5v14l-4-3.5h-2.5z" fill="none" stroke="#fff" stroke-width="1.1"/>
<path d="M1184.5 745.5l4.5 4.5M1189 745.5l-4.5 4.5" stroke="#fff" stroke-width="1.1"/>
<!-- battery -->
<rect x="1200.5" y="744" width="13" height="7.5" fill="none" stroke="#fff" stroke-width="1.1"/>
<rect x="1202" y="745.5" width="10" height="4.5" fill="#fff"/>
<rect x="1214" y="746" width="1.5" height="3.5" fill="#fff"/>
<!-- wifi -->
<g fill="none" stroke="#fff" stroke-width="1.1">
<path d="M1226 751a10 10 0 0 1 10 -10"/><path d="M1229 751a7 7 0 0 1 7 -7"/><path d="M1232 751a4 4 0 0 1 4 -4"/>
</g>
<circle cx="1236.5" cy="750.5" r="1.3" fill="#fff"/>
<!-- notification -->
<path d="M1326.5 740.5h16v12h-5l-3 3l-3-3h-5z" fill="none" stroke="#fff" stroke-width="1.1"/>
<rect x="1361" y="728" width="1" height="40" fill="#5a5a66"/>
</svg>
</body></html>
